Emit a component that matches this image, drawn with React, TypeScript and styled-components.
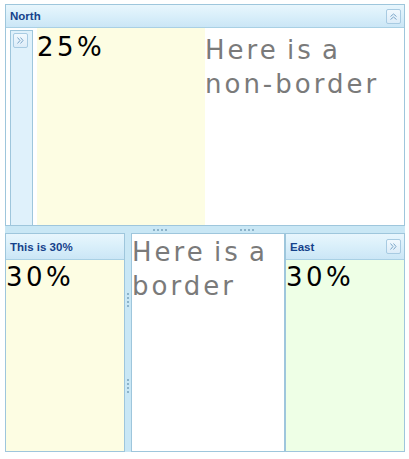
import React from 'react';
import styled, { createGlobalStyle } from 'styled-components';

const GlobalStyle = createGlobalStyle`
  html, body {
    margin: 0;
    padding: 0;
    background: #ffffff;
  }
`;

const Viewport = styled.div`
  width: 409px;
  height: 459px;
  box-sizing: border-box;
  padding: 4px 4px 0 5px;
  display: flex;
  flex-direction: column;
  font-family: 'DejaVu Sans', Verdana, sans-serif;
`;

const Panel = styled.div<{ $width?: number; $height?: number }>`
  box-sizing: border-box;
  display: flex;
  flex-direction: column;
  border: 1px solid #9ec6dc;
  ${(p) => (p.$width ? `width: ${p.$width}px; flex: none;` : 'flex: 1;')}
  ${(p) => (p.$height ? `height: ${p.$height}px; flex: none;` : '')}
  min-width: 0;
`;

const Header = styled.div<{ $height: number }>`
  height: ${(p) => p.$height}px;
  flex: none;
  box-sizing: border-box;
  display: flex;
  align-items: center;
  justify-content: space-between;
  padding: 0 3px 0 4px;
  background: linear-gradient(to bottom, #e8f6fd 0%, #d9effa 50%, #cbe6f6 100%);
  border-bottom: 1px solid #a9d0e4;
`;

const Title = styled.span`
  font-family: 'Liberation Sans', Arial, sans-serif;
  font-weight: bold;
  font-size: 11.5px;
  color: #15428b;
`;

const ToolButton = styled.div`
  width: 15px;
  height: 15px;
  box-sizing: border-box;
  border: 1px solid #a8cbe2;
  border-radius: 2px;
  background: linear-gradient(to bottom, #f1f9fe, #dcecf8);
  display: flex;
  align-items: center;
  justify-content: center;
`;

const Body = styled.div<{ $bg: string }>`
  flex: 1;
  display: flex;
  background: ${(p) => p.$bg};
  min-height: 0;
  overflow: hidden;
`;

const CollapsedStrip = styled.div`
  width: 23px;
  flex: none;
  box-sizing: border-box;
  margin: 2px 4px 0 4px;
  border: 1px solid #9ec6dc;
  border-bottom: none;
  background: #dff1fb;
  padding: 2px 0 0 2px;
`;

const Region = styled.div<{ $bg: string; $width?: number; $padTop: number; $border?: boolean }>`
  box-sizing: border-box;
  background: ${(p) => p.$bg};
  ${(p) => (p.$width ? `width: ${p.$width}px; flex: none;` : 'flex: 1;')}
  padding-top: ${(p) => p.$padTop}px;
  ${(p) => (p.$border ? 'border: 1px solid #9ec6dc;' : '')}
  min-width: 0;
  overflow: hidden;
`;

const BigText = styled.div<{ $grey?: boolean }>`
  font-family: 'DejaVu Sans', Verdana, sans-serif;
  font-size: 26px;
  line-height: 34px;
  letter-spacing: ${(p) => (p.$grey ? 3 : 3.5)}px;
  word-spacing: -3px;
  color: ${(p) => (p.$grey ? '#7a7a7a' : '#000000')};
  white-space: nowrap;
`;

const HSplitter = styled.div`
  height: 7px;
  flex: none;
  background: #c9e7f5;
  display: flex;
  justify-content: space-between;
  padding: 3px 151px 0 148px;
  box-sizing: border-box;
`;

const VSplitter = styled.div`
  width: 6px;
  flex: none;
  background: #c9e7f5;
  display: flex;
  flex-direction: column;
  justify-content: space-between;
  align-items: center;
  padding: 60px 0 59px 0;
  box-sizing: border-box;
`;

const Dots = styled.div<{ $vertical?: boolean }>`
  display: flex;
  flex-direction: ${(p) => (p.$vertical ? 'column' : 'row')};
  gap: 2px;
`;

const Dot = styled.span`
  width: 2px;
  height: 2px;
  background: #8cb3ca;
  display: block;
`;

const BottomRow = styled.div`
  display: flex;
  height: 219px;
  flex: none;
`;

const Chevrons: React.FC<{ dir: 'up' | 'right' }> = ({ dir }) => (
  <svg width="9" height="9" viewBox="0 0 9 9">
    <g
      fill="none"
      stroke="#7ba6c9"
      strokeWidth="1"
      transform={dir === 'up' ? 'rotate(-90 4.5 4.5)' : undefined}
    >
      <polyline points="1.5,1.5 4,4.5 1.5,7.5" />
      <polyline points="4.5,1.5 7,4.5 4.5,7.5" />
    </g>
  </svg>
);

const DotRow: React.FC<{ vertical?: boolean }> = ({ vertical }) => (
  <Dots $vertical={vertical}>
    {[0, 1, 2, 3].map((i) => (
      <Dot key={i} />
    ))}
  </Dots>
);

const App: React.FC = () => {
  return (
    <>
      <GlobalStyle />
      <Viewport>
        <Panel $height={222}>
          <Header $height={23}>
            <Title>North</Title>
            <ToolButton>
              <Chevrons dir="up" />
            </ToolButton>
          </Header>
          <Body $bg="#ffffff">
            <CollapsedStrip>
              <ToolButton>
                <Chevrons dir="right" />
              </ToolButton>
            </CollapsedStrip>
            <Region $bg="#fdfde3" $width={168} $padTop={2}>
              <BigText>25%</BigText>
            </Region>
            <Region $bg="#ffffff" $padTop={5}>
              <BigText $grey>
                Here is a
                <br />
                non-border
              </BigText>
            </Region>
          </Body>
        </Panel>
        <HSplitter>
          <DotRow />
          <DotRow />
        </HSplitter>
        <BottomRow>
          <Panel $width={120}>
            <Header $height={26}>
              <Title>This is 30%</Title>
            </Header>
            <Body $bg="#fdfde3">
              <Region $bg="transparent" $padTop={0}>
                <BigText>30%</BigText>
              </Region>
            </Body>
          </Panel>
          <VSplitter>
            <DotRow vertical />
            <DotRow vertical />
          </VSplitter>
          <Region $bg="#ffffff" $padTop={1} $border>
            <BigText $grey>
              Here is a
              <br />
              border
            </BigText>
          </Region>
          <Panel $width={120}>
            <Header $height={26}>
              <Title>East</Title>
              <ToolButton>
                <Chevrons dir="right" />
              </ToolButton>
            </Header>
            <Body $bg="#eeffe6">
              <Region $bg="transparent" $padTop={0}>
                <BigText>30%</BigText>
              </Region>
            </Body>
          </Panel>
        </BottomRow>
      </Viewport>
    </>
  );
};

export default App;
